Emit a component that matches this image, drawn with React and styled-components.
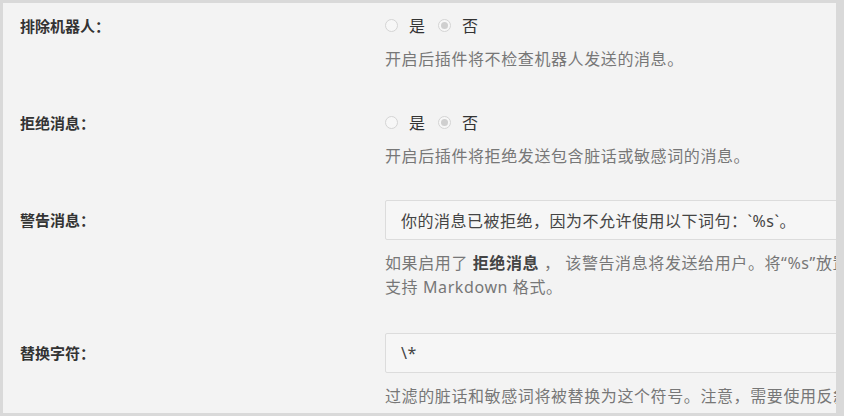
import React from 'react';
import styled, { createGlobalStyle } from 'styled-components';

const GlobalStyle = createGlobalStyle`
  html, body {
    margin: 0;
    padding: 0;
    background: #d9d9d9;
  }
  body {
    font-family: "Noto Sans", "Noto Sans CJK SC", sans-serif;
  }
`

const Panel = styled.div`
  box-sizing: border-box;
  width: 844px;
  height: 416px;
  overflow: hidden;
  background-color: #f3f3f3;
  border: 3px solid #d9d9d9;
  border-right-width: 8px;
  padding: 3px 0 0 17px;
`

const Group = styled.div`
  display: grid;
  grid-template-columns: 365px 1fr;
  margin-bottom: 34px;
  min-width: 0;
`

const Label = styled.div`
  padding-top: 10px;
  font-size: 15px;
  line-height: 20px;
  font-weight: 700;
  color: #333;
`

const Control = styled.div`
  min-width: 0;
`

const RadioRow = styled.div`
  display: flex;
  align-items: center;
  padding-top: 8px;
  height: 22px;
  font-size: 16px;
  color: #333;
`

const RadioItem = styled.label`
  display: flex;
  align-items: center;
  gap: 11px;
  margin-right: 13px;
`

const Circle = styled.span`
  box-sizing: border-box;
  width: 13px;
  height: 13px;
  border-radius: 50%;
  border: 1px solid #d4d4d4;
  background: #f7f7f7;
  display: flex;
  align-items: center;
  justify-content: center;

  &::after {
    content: '';
    width: 7px;
    height: 7px;
    border-radius: 50%;
    background: ${p => (p.$checked ? '#cfcfcf' : 'transparent')};
  }
`

const Help = styled.div`
  margin-top: ${p => p.$gap || 13}px;
  font-size: 16px;
  letter-spacing: 0.6px;
  line-height: ${p => p.$lh || 20}px;
  color: #777;
  white-space: nowrap;

  & b {
    color: #444;
    font-weight: 700;
  }
`

const Input = styled.div`
  box-sizing: border-box;
  height: 40px;
  width: 520px;
  border: 1px solid #dcdcdc;
  border-radius: 2px;
  background: #f6f6f6;
  padding: 0 15px;
  display: flex;
  align-items: center;
  font-size: 16px;
  letter-spacing: 0.5px;
  color: #444;
  white-space: nowrap;
`

const YesNo = () => (
  <RadioRow>
    <RadioItem>
      <Circle />
      是
    </RadioItem>
    <RadioItem>
      <Circle $checked />
      否
    </RadioItem>
  </RadioRow>
)

const App = () => {
  return (
    <>
      <GlobalStyle />
      <Panel>
        <Group>
          <Label>排除机器人：</Label>
          <Control>
            <YesNo />
            <Help>开启后插件将不检查机器人发送的消息。</Help>
          </Control>
        </Group>
        <Group>
          <Label>拒绝消息：</Label>
          <Control>
            <YesNo />
            <Help>开启后插件将拒绝发送包含脏话或敏感词的消息。</Help>
          </Control>
        </Group>
        <Group>
          <Label>警告消息：</Label>
          <Control>
            <Input>你的消息已被拒绝，因为不允许使用以下词句：`%s`。</Input>
            <Help $gap={11} $lh={24}>
              如果启用了 <b>拒绝消息</b> ， 该警告消息将发送给用户。将“%s”放置于被过滤词句显示的位置。
              <br />
              支持 Markdown 格式。
            </Help>
          </Control>
        </Group>
        <Group>
          <Label>替换字符：</Label>
          <Control>
            <Input>\*</Input>
            <Help $gap={11} $lh={24}>
              过滤的脏话和敏感词将被替换为这个符号。注意，需要使用反斜杠转义 Markdown 特殊字符。
            </Help>
          </Control>
        </Group>
      </Panel>
    </>
  );
}

export default App;
